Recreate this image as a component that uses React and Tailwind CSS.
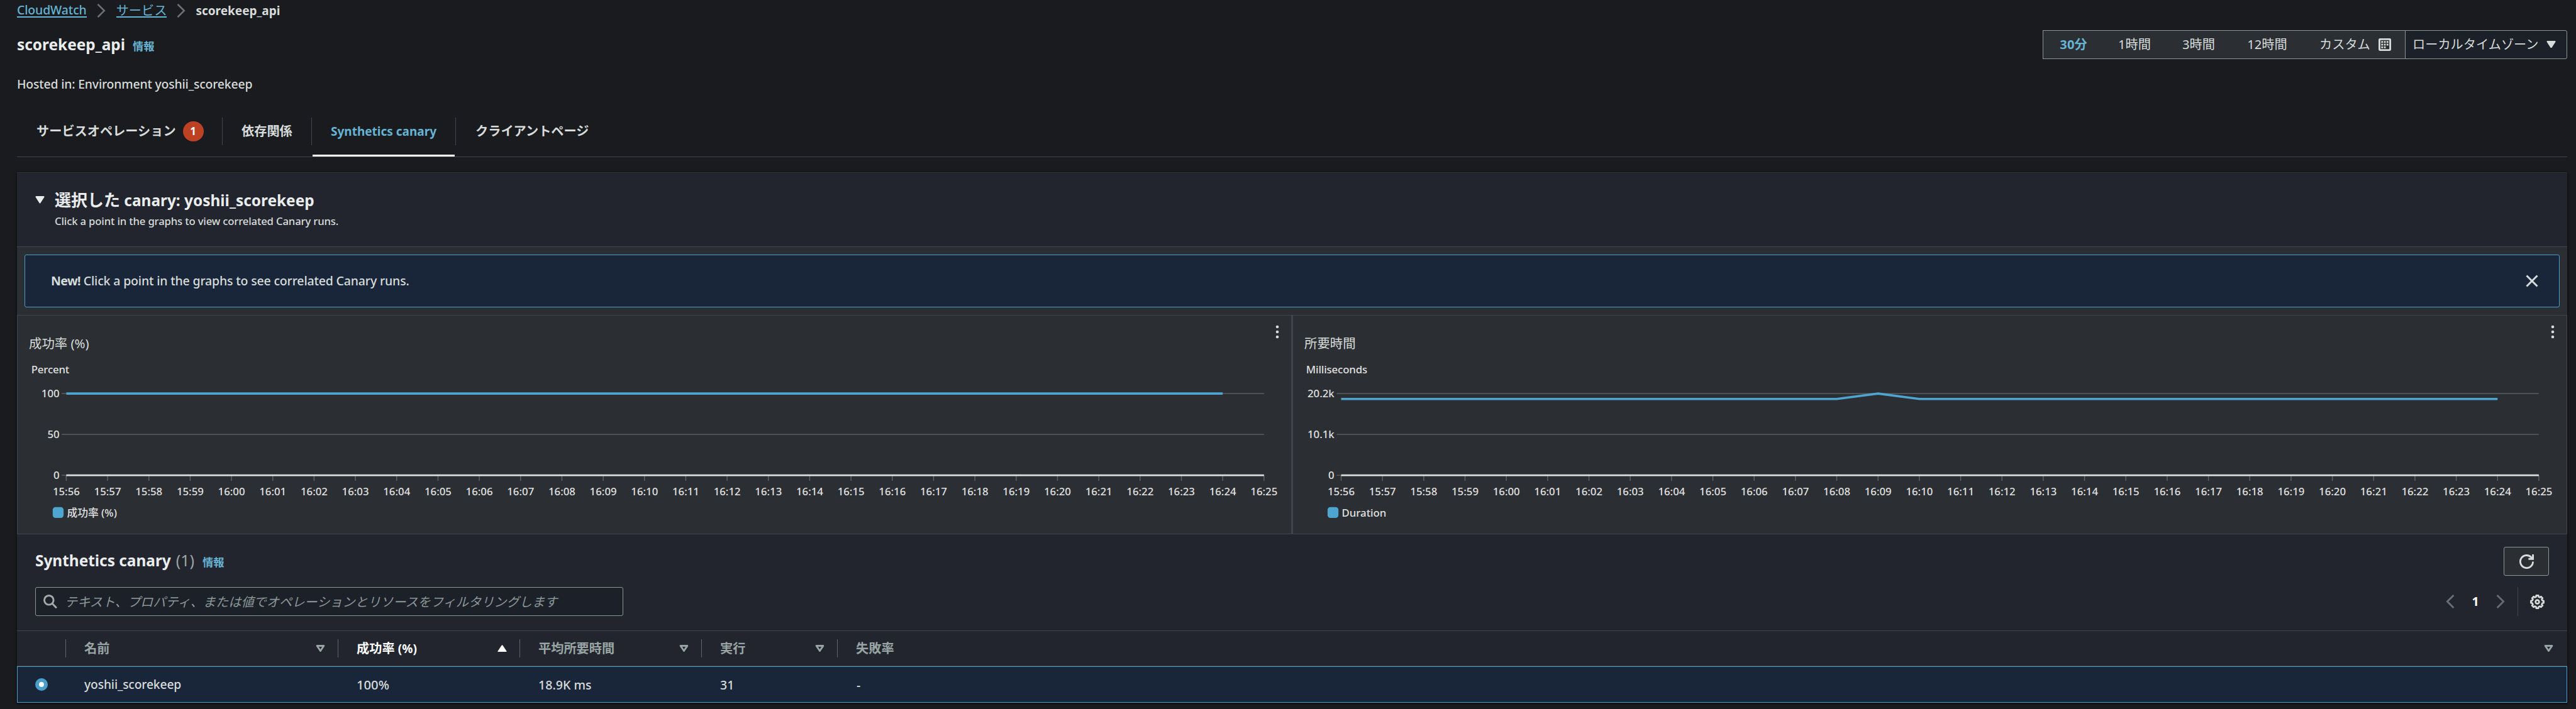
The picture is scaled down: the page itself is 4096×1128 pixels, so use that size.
import React from "react";

const TIMES = Array.from({ length: 30 }, (_, i) => {
  const m = 15 * 60 + 56 + i;
  return `${Math.floor(m / 60)}:${String(m % 60).padStart(2, "0")}`;
});

const STEP = 65.67;

function BreadcrumbChevron() {
  return (
    <svg className="h-[22px] w-[14px]" viewBox="0 0 14 22" fill="none" stroke="#697077" strokeWidth="2.6">
      <path d="M1.5 0.8 11.8 11 1.5 21.2" />
    </svg>
  );
}

function TriangleDown({ className }) {
  return (
    <svg className={className} viewBox="0 0 20 16" fill="currentColor" stroke="currentColor" strokeWidth="3" strokeLinejoin="round">
      <path d="M1.8 1.6h16.4L10 14.2z" />
    </svg>
  );
}

function SortDown() {
  return (
    <svg className="h-[11.6px] w-[15px]" viewBox="0 0 20 16" fill="none" stroke="currentColor" strokeWidth="4" strokeLinejoin="round">
      <path d="M2.6 2h14.8L10 13.2z" />
    </svg>
  );
}

function SortUp() {
  return (
    <svg className="h-[11.6px] w-[15px]" viewBox="0 0 20 16" fill="currentColor" stroke="currentColor" strokeWidth="3" strokeLinejoin="round">
      <path d="M1.8 14.4h16.4L10 1.8z" />
    </svg>
  );
}

function CalendarIcon() {
  const dots = [[6, 6], [12, 6], [18, 6], [6, 12], [12, 12], [18, 12], [6, 18], [12, 18]];
  return (
    <svg className="h-5 w-5" viewBox="0 0 28 28">
      <rect x="2" y="2" width="24" height="24" rx="1" fill="none" stroke="#d7dcdb" strokeWidth="4" />
      {dots.map(([x, y]) => (
        <rect key={`${x}-${y}`} x={x} y={y} width="4" height="4" fill="#d7dcdb" />
      ))}
    </svg>
  );
}

function RefreshIcon() {
  return (
    <svg className="h-[23px] w-[23px]" viewBox="0 0 32 32" fill="none" stroke="#d7dcdb" strokeWidth="4">
      <path d="M30 16a14 14 0 1 1-3.4-9.1L29 10" />
      <path d="M30 0v10H20" />
    </svg>
  );
}

function GearIcon() {
  const pts = [];
  for (let i = 0; i < 8; i++) {
    const a = (i * Math.PI) / 4;
    [[-0.25, 11.4], [-0.17, 14.2], [0.17, 14.2], [0.25, 11.4]].forEach(([d, r]) => {
      pts.push(`${(16 + r * Math.sin(a + d)).toFixed(2)} ${(16 - r * Math.cos(a + d)).toFixed(2)}`);
    });
  }
  return (
    <svg className="h-[23px] w-[23px]" viewBox="0 0 32 32" fill="none" stroke="#d7dcdb" strokeWidth="3.8" strokeLinejoin="round">
      <path d={`M${pts.join("L")}Z`} />
      <circle cx="16" cy="16" r="4" />
    </svg>
  );
}

function TopBar() {
  return (
    <>
      <nav className="flex h-[34px] items-center text-[19.4px] leading-[26px]">
        <a className="border-b-2 border-[#66b3d3] leading-[20px] font-medium tracking-[-0.1px] text-[#66b3d3]">CloudWatch</a>
        <span className="mr-[17px] ml-4"><BreadcrumbChevron /></span>
        <a className="border-b-2 border-[#66b3d3] text-[20.2px] leading-[20px] text-[#66b3d3]">サービス</a>
        <span className="mr-4 ml-4"><BreadcrumbChevron /></span>
        <span className="text-[19px] font-bold">scorekeep_api</span>
      </nav>
      <header className="flex h-[73px] items-center justify-between">
        <div className="flex items-baseline gap-3 font-bold">
          <h1 className="text-[24.4px] leading-[32px] text-[#eaeded]">scorekeep_api</h1>
          <a className="text-[17.3px] text-[#66b3d3]">情報</a>
        </div>
        <div className="flex h-[46px] w-[834px] text-[20.2px]">
          <div className="flex w-[577px] items-center border border-[#8a9797] bg-[#2b2e32] text-center">
            <span className="w-[96px] font-bold text-[#66b3d3]">30分</span>
            <span className="w-[98px]">1時間</span>
            <span className="w-[106px]">3時間</span>
            <span className="w-[112px]">12時間</span>
            <span className="mr-[13px] ml-[27px]">カスタム</span>
            <CalendarIcon />
          </div>
          <div className="-ml-px flex w-[258px] items-center justify-between rounded-r-[3px] border border-[#8a9797] bg-[#1c2028] pr-[17px] pl-[11px]">
            <span>ローカルタイムゾーン</span>
            <TriangleDown className="h-[11.6px] w-[15px]" />
          </div>
        </div>
      </header>
      <p className="mb-[7px] flex h-[54px] items-center text-[19.4px] font-medium tracking-[-0.17px]">
        Hosted in: Environment yoshii_scorekeep
      </p>
    </>
  );
}

function TabSeparator() {
  return <span className="h-11 w-px bg-[#42454e]" />;
}

function Tabs() {
  return (
    <div className="mb-6 flex h-[82px] items-center border-b border-[#42454e] text-[20.2px] font-bold">
      <div className="flex w-[326px] items-center pl-[31px]">
        サービスオペレーション
        <span className="ml-[11px] flex h-8 w-[33px] items-center justify-center rounded-full bg-[#bd4123] text-[17px] text-white">1</span>
      </div>
      <TabSeparator />
      <div className="w-[141px] pl-[30px]">依存関係</div>
      <TabSeparator />
      <div className="flex h-full w-[228px] flex-col">
        <span className="flex h-[78px] items-center pt-[4px] pl-[30px] text-[19px] text-[#66b3d3]">Synthetics canary</span>
        <span className="mx-px h-[3px] bg-white" />
      </div>
      <TabSeparator />
      <div className="pl-[31px]">クライアントページ</div>
    </div>
  );
}

function Chart({ title, unit, max, mid, legend, axisX, points }) {
  const line = points.map((y, i) => `${(i * STEP).toFixed(2)},${y}`).join(" ");
  return (
    <section className="w-[2025px]">
      <div className="flex h-[70px] justify-between pr-[19px] pl-[18px]">
        <h3 className="pt-[32px] text-[20.4px] leading-6">{title}</h3>
        <svg className="mt-[15px] h-[22px] w-[6px]" viewBox="0 0 6 22" fill="#d7dcdb">
          <circle cx="3" cy="3" r="2.3" />
          <circle cx="3" cy="11" r="2.3" />
          <circle cx="3" cy="19" r="2.3" />
        </svg>
      </div>
      <svg className="block h-[277px] w-[2025px] text-[16.8px] font-medium" viewBox="0 0 2025 277" fill="#e0e0e0">
        <g transform={`translate(${axisX} 0)`}>
          <text className="tracking-[-0.15px]" x="-55.7" y="21.8">{unit}</text>
          <g stroke="#646566" strokeWidth="1.44">
            <path d="M-7.2 54.1H1904.4M-7.2 119.1H1904.4M-7.2 184.1H0" />
            {TIMES.map((t, i) => (
              <path key={t} d={`M${i * STEP} 184V193`} />
            ))}
          </g>
          <path d="M0 184.1H1904.4" stroke="#dfdfdf" strokeWidth="2.9" />
          <polyline points={line} fill="none" stroke="#4ea6d0" strokeWidth="3.6" />
          <g textAnchor="end">
            <text x="-10.8" y="60">{max}</text>
            <text x="-10.8" y="125">{mid}</text>
            <text x="-10.8" y="190">0</text>
          </g>
          <g textAnchor="middle">
            {TIMES.map((t, i) => (
              <text key={t} x={i * STEP} y="216.4">{t}</text>
            ))}
          </g>
          <rect x="-21.6" y="234.7" width="17.3" height="17.3" rx="4.5" fill="#4ea6d0" />
          <text x="1" y="249.8">{legend}</text>
        </g>
      </svg>
    </section>
  );
}

const RATE = Array(29).fill(54.1);
const DURATION = Array.from({ length: 29 }, (_, i) => (i === 13 ? 54.1 : 62.8));

function HeadCell({ children, sort, className = "" }) {
  return (
    <div className={`flex items-center ${className}`}>
      <span className="mr-[29px] h-[29px] w-px bg-[#5f646c]" />
      <span>{children}</span>
      <span className="ml-auto">{sort}</span>
    </div>
  );
}

function CanaryTable() {
  return (
    <section>
      <div className="px-[29px] pt-5 pb-[23px]">
        <div className="mb-[18px] flex h-[46px] items-center justify-between">
          <h2 className="flex items-baseline text-[24.4px] leading-[32px] font-bold text-[#eaeded]">
            Synthetics canary
            <span className="ml-[8px] text-[25px] font-normal text-[#99a5a4]">(1)</span>
            <a className="ml-[13px] text-[17.3px] text-[#66b3d3]">情報</a>
          </h2>
          <button className="flex h-[46px] w-[72px] items-center justify-center rounded-[3px] border border-[#8a9797] bg-[#2b2e32]">
            <RefreshIcon />
          </button>
        </div>
        <div className="flex h-[46px] items-center justify-between">
          <div className="flex h-[46px] w-[935px] items-center rounded-[3px] border border-[#8a9797] bg-[#1c2028] pl-3">
            <svg className="h-[22px] w-[22px]" viewBox="0 0 30 30" fill="none" stroke="#a0abaa" strokeWidth="4">
              <circle cx="12" cy="12" r="10" />
              <path d="m19 19 9.5 10" />
            </svg>
            <span className="ml-[12px] text-[20.2px] text-[#8a9797] italic">
              テキスト、プロパティ、または値でオペレーションとリソースをフィルタリングします
            </span>
          </div>
          <div className="flex h-full items-center">
            <svg className="h-[22px] w-[14px]" viewBox="0 0 14 22" fill="none" stroke="#687078" strokeWidth="2.9">
              <path d="M12.4 1 2.4 11l10 10" />
            </svg>
            <span className="w-[66px] text-center text-[19.6px] font-bold text-white">1</span>
            <svg className="h-[22px] w-[14px]" viewBox="0 0 14 22" fill="none" stroke="#676a72" strokeWidth="2.9">
              <path d="m1.6 1 10 10-10 10" />
            </svg>
            <span className="mr-[19px] ml-5 h-full w-px bg-[#42454e]" />
            <span className="mr-[7px]"><GearIcon /></span>
          </div>
        </div>
      </div>
      <div className="grid h-[57px] grid-cols-[77px_433px_289px_289px_216px_1fr] border-y border-[#42454e] text-[20.2px] font-bold text-[#99a5a4]">
        <span />
        <HeadCell className="pr-5" sort={<SortDown />}>名前</HeadCell>
        <HeadCell className="pr-5 text-white" sort={<SortUp />}>
          成功率 <span className="text-[19px]">(%)</span>
        </HeadCell>
        <HeadCell className="pr-5" sort={<SortDown />}>平均所要時間</HeadCell>
        <HeadCell className="pr-5" sort={<SortDown />}>実行</HeadCell>
        <HeadCell className="pr-[22px]" sort={<SortDown />}>失敗率</HeadCell>
      </div>
      <div className="grid h-[58px] grid-cols-[106px_433px_289px_289px_216px_1fr] items-center border border-[#4a9eca] bg-[#192639] text-[19.6px] font-medium">
        <span className="ml-7 flex h-5 w-5 items-center justify-center rounded-full bg-[#4a9eca]">
          <span className="h-2 w-2 rounded-full bg-white" />
        </span>
        <span className="pt-px text-[19.3px] tracking-[-0.15px]">yoshii_scorekeep</span>
        <span className="pt-px text-[20.2px]">100%</span>
        <span className="pt-px">18.9K ms</span>
        <span className="pt-px">31</span>
        <span className="pt-px pl-px">-</span>
      </div>
    </section>
  );
}

export default function App() {
  return (
    <div className="h-[1128px] w-[4096px] overflow-hidden bg-[#191b1f] pr-[14px] pl-[27px] font-['Noto_Sans','Noto_Sans_CJK_JP',sans-serif] text-[#d7dcdb]">
      <TopBar />
      <Tabs />
      <main className="bg-[#22252d] shadow-[0_1px_3px_1px_rgba(0,0,0,0.5)]">
        <div className="h-[119px] border-t border-b border-t-[#2f3135] border-b-[#42454e] pt-[27px] pl-[29px]">
          <div className="flex h-8 items-center">
            <TriangleDown className="mr-4 h-[11.6px] w-[15px] text-[#eaeded]" />
            <h2 className="text-[24.4px] leading-8 font-bold text-[#eaeded]">
              <span className="text-[26px]">選択した</span> canary: yoshii_scorekeep
            </h2>
          </div>
          <p className="mt-[6px] pl-[31px] text-[16.7px] leading-6 font-medium tracking-[-0.155px]">
            Click a point in the graphs to view correlated Canary runs.
          </p>
        </div>
        <div className="bg-[#2b2e32] p-3">
          <div className="flex h-[84px] items-center justify-between rounded-[3px] border border-[#4a9eca] bg-[#192639] pr-[33px] pl-[41px]">
            <p className="text-[19.5px] font-medium tracking-[-0.17px]">
              <b className="tracking-[-0.6px]">New!</b> Click a point in the graphs to see correlated Canary runs.
            </p>
            <svg className="h-[20px] w-[20px]" viewBox="0 0 20 20" fill="none" stroke="#d7dcdb" strokeWidth="3">
              <path d="m1.5 1.5 17 17m0-17-17 17" />
            </svg>
          </div>
        </div>
        <div className="flex h-[349px] border border-[#42454e] bg-[#2b2e32]">
          <Chart title="成功率 (%)" unit="Percent" max="100" mid="50" legend="成功率 (%)" axisX={77.4} points={RATE} />
          <div className="w-[3px] bg-[#42454e]" />
          <Chart title="所要時間" unit="Milliseconds" max="20.2k" mid="10.1k" legend="Duration" axisX={76.5} points={DURATION} />
        </div>
        <CanaryTable />
      </main>
    </div>
  );
}
